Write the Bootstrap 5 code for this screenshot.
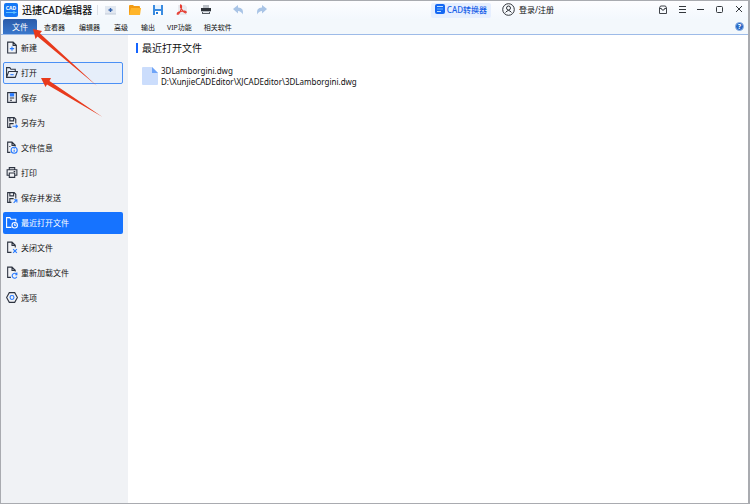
<!DOCTYPE html>
<html lang="zh-CN">
<head>
<meta charset="utf-8">
<meta name="viewport" content="width=device-width, initial-scale=1">
<title>迅捷CAD编辑器</title>
<link href="https://cdn.jsdelivr.net/npm/bootstrap@5.3.0/dist/css/bootstrap.min.css" rel="stylesheet">
<style>
  body { font-family: "Noto Sans", "Noto Sans CJK SC", sans-serif; font-size: 8px; line-height: 11px; color: #111; background: #fff; }
  button { font: inherit; color: inherit; background: none; border: 0; padding: 0; }
  svg { display: block; flex: none; }
  .app { border: 1px solid #a9abb0; border-right-width: 2px; }
  .titlebar { height: 18px; background: linear-gradient(#fdfdff, #f3f8fd); }
  .brand { font-size: 10px; line-height: 14px; font-weight: 500; padding-left: 3px; gap: 4px; width: 96px; white-space: nowrap; }
  .brand, .login { padding-bottom: 1px; }
  .tools { gap: 12px; padding-left: 7px; border-left: 1px solid #dcdfe6; height: 10px; }
  .converter { color: #1660e8; background: #e6efff; font-weight: 500; height: 15px; padding: 0 4px 2px; gap: 2px; border-radius: 2px; }
  .login { gap: 4px; }
  .account { gap: 11px; }
  .window-tools { gap: 9px; padding-right: 4px; }
  .tabs { height: 16px; background: #f3f8fc; border-bottom: 1px solid #9dbbe8; font-size: 7px; padding-left: 2px; }
  .tabs .tab { padding: 1px 7px 0; height: 15px; }
  .tabs .tab.active { width: 34px; padding-top: 0; color: #fff; font-size: 8px; background: linear-gradient(#2a5ba9, #3977cc); border-radius: 2px 2px 0 0; }
  .tabs .tab.wide { padding-left: 6px; padding-right: 6px; }
  .side { width: 127px; background: #f0f2f5; padding: 2px 5px 2px 2px; gap: 3px; }
  .side button { height: 22px; border: 1px solid transparent; border-radius: 2px; padding: 0 2px 1px; gap: 3px; text-align: left; }
  .side button.hovered { background: #e6eefa; border-color: #4b90f5; }
  .side button.current { background: #1673ff; color: #fff; }
  .ico { width: 12px; height: 13px; fill: none; stroke: #2c3340; stroke-width: 1; }
  .ico .b { stroke: #277aff; }
  .ico .solid { fill: #277aff; }
  .current .ico, .current .ico .b { stroke: #fff; }
  .recent { padding: 8px; }
  .recent h1 { font-size: 10px; line-height: 10px; font-weight: 400; margin: 0 0 12px; padding-left: 4px; border-left: 2px solid #1565ff; }
  .recent a { color: #111; text-decoration: none; gap: 3px; padding-left: 6px; }
  .arrows { position: absolute; left: 0; top: 0; pointer-events: none; }
</style>
<script src="https://cdn.jsdelivr.net/npm/bootstrap@5.3.0/dist/js/bootstrap.bundle.min.js"></script>
</head>
<body>
<div class="app min-vh-100 d-flex flex-column position-relative">
  <header>
    <div class="titlebar d-flex align-items-center justify-content-between">
      <div class="d-flex align-items-center">
        <div class="brand d-flex align-items-center">
          <svg width="14" height="14" viewBox="0 0 14 14"><rect width="14" height="14" rx="2" fill="#1478f5"/><text x="7" y="7" text-anchor="middle" font-size="5" font-weight="700" fill="#fff">CAD</text><path d="M2 9.500h8M10 8v3M8.500 9.500h4" stroke="#61c4ff" fill="none"/></svg>
          <span>迅捷CAD编辑器</span>
        </div>
        <div class="tools d-flex align-items-center">
          <button aria-label="新建"><svg width="12" height="12" viewBox="0 0 12 12"><path d="M0 2h11v8H0z" fill="#e2e8f1"/><path d="M0 10h11" stroke="#c2cbd8"/><path d="M5.500 4v4M3.500 6h4" stroke="#3563ad" stroke-width="1.400"/></svg></button>
          <button aria-label="打开"><svg width="12" height="12" viewBox="0 0 12 12"><path d="M0 2q0-1 1-1h3l1 1h5q1 0 1 1v7q0 1-1 1H0z" fill="#f39b13"/><path d="M2 4h10l-1 7H0z" fill="#ffb52b"/></svg></button>
          <button aria-label="保存"><svg width="11" height="12" viewBox="0 0 11 12"><path d="M0 1h10v10H0z" fill="#3a8be0"/><path d="M2 1h6v4H2z" fill="#e5f2ff"/><path d="M2 7h6v4H2z" fill="#fff"/><path d="M3 8h2v2H3z" fill="#2379d8"/></svg></button>
          <button aria-label="PDF"><svg width="12" height="12" viewBox="0 0 12 12"><path d="M2 1h7l2 2v8H2z" fill="#e9ebf0"/><path d="M4 .8q2 0 1.500 3Q4.500 8 2.500 10q-2 1-1-1 2-2 7-2 3 1 1 2Q7 8 4.500 3.500V1" fill="none" stroke="#e63c31" stroke-width="1.100"/></svg></button>
          <button aria-label="打印"><svg width="12" height="12" viewBox="0 0 12 12"><path d="M3 1h6v3H3z" fill="#bbc0c7"/><path d="M1 4h10v3H1z" fill="#2e3339"/><path d="M1 7h10v1H1z" fill="#b4b9c0"/><path d="M2 8h8v2H2z" fill="#555b63"/><path d="M3 8h6v1H3z" fill="#e7eaee"/></svg></button>
          <button class="ms-2" aria-label="撤销"><svg width="12" height="12" viewBox="0 0 12 12"><path d="M1 5l5-4v2.500q6 0 5 7Q9 7 6 7v2.500z" fill="#a9c4e6"/></svg></button>
          <button aria-label="重做"><svg width="12" height="12" viewBox="0 0 12 12"><path d="M11 5L6 1v2.500q-6 0-5 7Q3 7 6 7v2.500z" fill="#a9c4e6"/></svg></button>
        </div>
      </div>
      <div class="d-flex align-items-center gap-5">
        <div class="account d-flex align-items-center me-5">
          <button class="converter d-flex align-items-center"><svg width="10" height="10" viewBox="0 0 10 10"><rect width="10" height="10" rx="2" fill="#1668f3"/><path d="M2 2.500h6M2 7.500h4" stroke="#bfe0ff"/><path d="M2 4.500h6v1H2z" fill="#62b4ff"/></svg>CAD转换器</button>
          <button class="login d-flex align-items-center"><svg width="13" height="13" viewBox="0 0 13 13" fill="none" stroke="#30343a"><circle cx="6.500" cy="6.500" r="5.800"/><circle cx="6.500" cy="5" r="2"/><path d="M3.500 9.500Q6.500 5.500 9.500 9.500"/></svg>登录/注册</button>
        </div>
        <div class="window-tools d-flex align-items-center ms-2">
          <button aria-label="消息"><svg width="10" height="10" viewBox="0 0 10 10" fill="none" stroke="#41454b"><path d="M1.500 3l1-2h5l1 2v5.500h-7zM1.500 3.500h2l.5 1.500h2l.5-1.500h2"/></svg></button>
          <button aria-label="菜单"><svg width="10" height="10" viewBox="0 0 10 10" stroke="#34383d"><path d="M2 1.500h7M2 4.500h7M2 7.500h7"/></svg></button>
          <button aria-label="最小化"><svg width="10" height="10" viewBox="0 0 10 10" stroke="#34383d"><path d="M1 4.500h7"/></svg></button>
          <button aria-label="最大化"><svg width="10" height="10" viewBox="0 0 10 10" fill="none" stroke="#34383d"><rect x="1.500" y="1.500" width="6" height="6" rx="1"/></svg></button>
          <button aria-label="关闭"><svg width="10" height="10" viewBox="0 0 10 10" stroke="#34383d"><path d="M2 1l6 6M8 1L2 7"/></svg></button>
        </div>
      </div>
    </div>
    <nav class="tabs d-flex align-items-center">
      <button class="tab active">文件</button>
      <button class="tab">查看器</button>
      <button class="tab">编辑器</button>
      <button class="tab">高级</button>
      <button class="tab wide">输出</button>
      <button class="tab wide">VIP功能</button>
      <button class="tab wide">相关软件</button>
      <button class="ms-auto me-1" aria-label="帮助"><svg width="9" height="9" viewBox="0 0 9 9"><circle cx="4.500" cy="4.500" r="4" fill="#2868c5" stroke="#8db2e5"/><text x="4.500" y="7" text-anchor="middle" font-size="7" font-weight="700" fill="#fff">?</text></svg></button>
    </nav>
  </header>
  <div class="d-flex flex-grow-1">
    <nav class="side d-flex flex-column flex-shrink-0">
      <button class="d-flex align-items-center"><svg class="ico" viewBox="0 0 11 12"><path d="M1.500 1h5L9.500 4v7h-8zM6.500 1v3h3"/><path class="b" d="M5.500 5v4M3.500 7h4"/></svg>新建</button>
      <button class="hovered d-flex align-items-center"><svg class="ico" viewBox="0 0 11 12"><path d="M.5 10.500v-9h3l1 1.500h4v2M.5 10.500l2-5.500h8l-2 5.500z"/><path class="b" d="M4 8h3"/></svg>打开</button>
      <button class="d-flex align-items-center"><svg class="ico" viewBox="0 0 11 12"><path d="M1.500 1.500h8v9h-8z"/><path class="b solid" d="M4 2v2.500h3V2"/><path d="M3.500 6.500h4M3.500 8.500h2"/></svg>保存</button>
      <button class="d-flex align-items-center"><svg class="ico" viewBox="0 0 11 12"><path d="M5 10.500H1.500v-9h6l1.500 1.500v4M3.500 2v2.500h3.500V2M3.500 10V7H7"/><path class="b" d="M6 9.500h4.500M9 8l1.500 1.500L9 11"/></svg>另存为</button>
      <button class="d-flex align-items-center"><svg class="ico" viewBox="0 0 11 12"><path d="M4 10.500H1.500V1h4L8.500 4v1M5.500 1v3h3M3 5h1"/><circle class="b" cx="7.500" cy="8.500" r="2.800"/><path class="b" d="M7.500 8v2M7.500 6.500v.7"/></svg>文件信息</button>
      <button class="d-flex align-items-center"><svg class="ico" viewBox="0 0 11 12"><path d="M3 3.500v-2h5v2M3 8.500H1v-5h9v5H8M3 6.500h5v4H3zM7 5h1.500"/></svg>打印</button>
      <button class="d-flex align-items-center"><svg class="ico" viewBox="0 0 11 12"><path d="M5 10.500H1.500v-9h6l1.500 1.500v4M3.500 2v2.500h3.500V2M3.500 10V7H7"/><path class="b" d="M7 11l3-3M7.500 8H10v2.500"/></svg>保存并发送</button>
      <button class="current d-flex align-items-center"><svg class="ico" viewBox="0 0 11 12"><path d="M5 10.500H.5v-9h3l1 1.500h4.500v2"/><circle cx="8" cy="8.500" r="2.500"/><path d="M8 7v1.500h1.300"/></svg>最近打开文件</button>
      <button class="d-flex align-items-center"><svg class="ico" viewBox="0 0 11 12"><path d="M5 10.500H1.500V1h4L8.500 4v2M5.500 1v3h3"/><path class="b" d="M6.500 7.500l3.500 3.500M10 7.500L6.500 11"/></svg>关闭文件</button>
      <button class="d-flex align-items-center"><svg class="ico" viewBox="0 0 11 12"><path d="M4.500 10.500H1.500V1h4L8.500 4v1M5.500 1v3h3"/><path class="b" d="M10 8a2.300 2.300 0 1 0 0 2M10 6v2H8.500"/></svg>重新加载文件</button>
      <button class="d-flex align-items-center"><svg class="ico" viewBox="0 0 11 12"><path d="M3 1.500h5L10.500 6 8 10.500H3L.5 6z"/><circle class="b" cx="5.500" cy="6" r="1.800"/></svg>选项</button>
    </nav>
    <main class="recent flex-grow-1">
      <h1>最近打开文件</h1>
      <a href="#" class="d-flex align-items-center">
        <svg width="16" height="20" viewBox="0 0 16 20"><path d="M1 1h9l6 6v11q0 1-1 1H1q-1 0-1-1V2q0-1 1-1" fill="#cbddfc"/><path d="M10 1l6 6h-6z" fill="#6fa4f8"/></svg>
        <span>3DLamborgini.dwg<br>D:\XunjieCADEditor\XJCADEditor\3DLamborgini.dwg</span>
      </a>
    </main>
  </div>
  <svg class="arrows" width="110" height="120" viewBox="1 1 110 120" fill="#e83a1c" aria-hidden="true">
    <path d="M33 29l9 2-2 2.500L97 86 37.500 36.500 35.500 39z"/>
    <path d="M41 78l10 0-1.500 3L102.500 117 47 84.500 45.500 87z"/>
  </svg>
</div>
</body>
</html>
